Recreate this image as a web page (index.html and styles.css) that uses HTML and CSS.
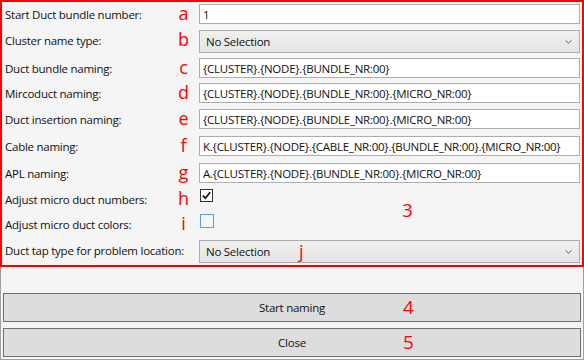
FILE: index.html
```html
<!DOCTYPE html>
<html lang="en">
<head>
    <meta charset="UTF-8">
    <meta name="viewport" content="width=device-width, initial-scale=1.0">
    <title>Naming settings</title>
    <link rel="stylesheet" href="styles.css">
</head>
<body>
    <div class="window">
        <div class="settings">
            <label class="field-label">Start Duct bundle number:<span class="marker">a</span></label>
            <input class="text-input" type="text" value="1">

            <label class="field-label">Cluster name type:<span class="marker">b</span></label>
            <div class="select">
                <span>No Selection</span>
                <svg class="arrow" width="7" height="4" viewBox="0 0 7 4"><path d="M0.5 0.5 L3.5 3.2 L6.5 0.5" fill="none" stroke="#5f5f5f" stroke-width="1"/></svg>
            </div>

            <label class="field-label">Duct bundle naming:<span class="marker">c</span></label>
            <input class="text-input" type="text" value="{CLUSTER}.{NODE}.{BUNDLE_NR:00}">

            <label class="field-label">Mircoduct naming:<span class="marker">d</span></label>
            <input class="text-input" type="text" value="{CLUSTER}.{NODE}.{BUNDLE_NR:00}.{MICRO_NR:00}">

            <label class="field-label">Duct insertion naming:<span class="marker">e</span></label>
            <input class="text-input" type="text" value="{CLUSTER}.{NODE}.{BUNDLE_NR:00}.{MICRO_NR:00}">

            <label class="field-label">Cable naming:<span class="marker">f</span></label>
            <input class="text-input" type="text" value="K.{CLUSTER}.{NODE}.{CABLE_NR:00}.{BUNDLE_NR:00}.{MICRO_NR:00}">

            <label class="field-label">APL naming:<span class="marker">g</span></label>
            <input class="text-input" type="text" value="A.{CLUSTER}.{NODE}.{BUNDLE_NR:00}.{MICRO_NR:00}">

            <label class="field-label">Adjust micro duct numbers:<span class="marker">h</span></label>
            <span class="check checked">
                <svg width="11" height="11" viewBox="0 0 11 11"><path d="M1.8 5.6 L4.3 8.2 L9.2 2.2" fill="none" stroke="#111" stroke-width="1.8"/></svg>
            </span>

            <label class="field-label">Adjust micro duct colors:<span class="marker">i</span></label>
            <span class="check hover"></span>

            <label class="field-label">Duct tap type for problem location:</label>
            <div class="select">
                <span>No Selection</span>
                <span class="marker marker-j">j</span>
                <svg class="arrow" width="7" height="4" viewBox="0 0 7 4"><path d="M0.5 0.5 L3.5 3.2 L6.5 0.5" fill="none" stroke="#5f5f5f" stroke-width="1"/></svg>
            </div>

            <span class="marker marker-area">3</span>
        </div>

        <div class="actions">
            <button class="action-button">Start naming<span class="marker marker-button">4</span></button>
            <button class="action-button">Close<span class="marker marker-button">5</span></button>
        </div>
    </div>
</body>
</html>
```

FILE: styles.css
```css
body {
    margin: 0;
    font-family: "Open Sans", "Noto Sans", sans-serif;
    font-size: 11.5px;
    letter-spacing: -0.25px;
    color: #111;
    background-color: #f5f5f5;
}
.window {
    width: 584px;
    height: 360px;
    display: flex;
    flex-direction: column;
}
.settings {
    position: relative;
    display: grid;
    grid-template-columns: 197px 381px;
    grid-template-rows: 26px 28px 25px 26px 27px 27px 26px 25px 26px 24px;
    align-items: start;
    padding: 2px 2px 1px 0;
    border: 2px solid #ff0000;
    height: 267px;
    box-sizing: border-box;
}
.field-label {
    position: relative;
    padding-left: 3px;
    line-height: 22px;
    white-space: nowrap;
}
.text-input {
    height: 20px;
    box-sizing: border-box;
    margin: 0;
    padding: 0 3px;
    border: 1px solid #abadb3;
    background: #fff;
    font-family: inherit;
    font-size: inherit;
    letter-spacing: inherit;
    color: #111;
    outline: none;
}
.select {
    position: relative;
    height: 23px;
    box-sizing: border-box;
    display: flex;
    align-items: center;
    justify-content: space-between;
    padding: 0 7px 0 6px;
    border: 1px solid #acacac;
    background: linear-gradient(#f0f0f0, #e5e5e5);
}
.check {
    display: flex;
    align-items: center;
    justify-content: center;
    width: 13px;
    height: 13px;
    box-sizing: border-box;
    margin-left: 1px;
    border: 1px solid #333;
    background: #fff;
}
.check.hover {
    width: 14px;
    height: 14px;
    border-color: #5b9ded;
    background: #f3f8ff;
}
.actions {
    flex: 1;
    display: flex;
    flex-direction: column;
    gap: 6px;
    padding: 26px 2px 0;
    border: 1px solid #a0a0a0;
    border-top: none;
}
.action-button {
    position: relative;
    height: 29px;
    margin: 0;
    padding: 0;
    border: 1px solid #707070;
    background-color: #dddddd;
    font-family: inherit;
    font-size: inherit;
    letter-spacing: inherit;
    color: #111;
}
.marker {
    position: absolute;
    color: #ff0000;
    font-size: 18px;
    letter-spacing: 0;
    line-height: 22px;
}
.field-label .marker {
    left: 172px;
    top: -2px;
    width: 19px;
    text-align: center;
}
.marker-j {
    left: 99px;
    top: -1px;
}
.marker-area {
    left: 400px;
    top: 198px;
    font-size: 19px;
    line-height: 20px;
}
.marker-button {
    left: 399px;
    top: 0;
    font-size: 19px;
    line-height: 27px;
}
```
